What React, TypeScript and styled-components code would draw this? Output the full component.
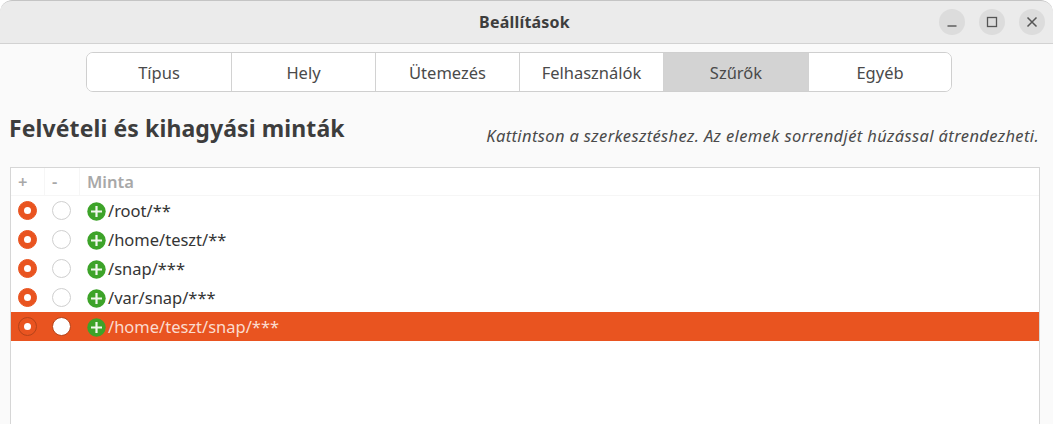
import styled, { createGlobalStyle } from 'styled-components';

const GlobalStyle = createGlobalStyle`
  html, body {
    margin: 0;
    height: 100%;
    overflow: hidden;
    background: #fff;
  }
  body {
    font-family: "Noto Sans", "Open Sans", sans-serif;
  }
`;

const Window = styled.div`
  width: 1053px;
  height: 424px;
  background: #fafafa;
  border-radius: 12px 12px 0 0;
  overflow: hidden;
  display: flex;
  flex-direction: column;
`;

const TitleBar = styled.header`
  height: 44px;
  box-sizing: border-box;
  flex: none;
  display: grid;
  grid-template-columns: 1fr auto 1fr;
  align-items: center;
  background: #ebebeb;
  border-top: 1px solid #c4c4c4;
  border-bottom: 1px solid #d2d2d2;
  border-radius: 12px 12px 0 0;
  padding: 0 8px 0 4px;
`;

const WindowTitle = styled.h1`
  grid-column: 2;
  margin: 0;
  font-size: 16px;
  font-weight: 700;
  color: #3d3d3d;
  letter-spacing: 0.2px;
`;

const WindowControls = styled.div`
  grid-column: 3;
  justify-self: end;
  display: flex;
  gap: 14px;
`;

const ControlButton = styled.button`
  width: 26px;
  height: 26px;
  padding: 0;
  border: none;
  border-radius: 50%;
  background: #dcdcdc;
  display: flex;
  align-items: center;
  justify-content: center;
`;

const Tabs = styled.nav`
  flex: none;
  align-self: flex-start;
  margin: 8px 0 0 86px;
  display: flex;
  height: 40px;
  box-sizing: border-box;
  background: #fff;
  border: 1px solid #cfcfcf;
  border-radius: 7px;
  overflow: hidden;
`;

const Tab = styled.div<{ $active?: boolean; $width: number }>`
  width: ${(p) => p.$width}px;
  box-sizing: border-box;
  display: flex;
  align-items: center;
  justify-content: center;
  font-size: 16.5px;
  color: #4a4a4a;
  background: ${(p) => (p.$active ? '#d3d3d3' : '#fff')};
  border-right: 1px solid #d2d2d2;

  &:last-child {
    border-right: none;
  }
`;

const SectionHeader = styled.div`
  flex: none;
  display: flex;
  justify-content: space-between;
  align-items: flex-end;
  padding: 0 14px 0 9px;
  margin-top: 21px;
  height: 34px;
`;

const SectionTitle = styled.h2`
  margin: 0 0 4px;
  font-size: 23px;
  line-height: 30px;
  font-weight: 700;
  letter-spacing: 0.1px;
  color: #3d3d3d;
`;

const Hint = styled.p`
  margin: 0 0 1px;
  font-size: 16.5px;
  line-height: 20px;
  font-style: italic;
  letter-spacing: 0.37px;
  color: #4a4a4a;
`;

const TreeFrame = styled.div`
  margin: 20px 13px 0 10px;
  flex: 1;
  background: #fff;
  border: 1px solid #d6d6d6;
  border-bottom: none;
`;

const HeaderRow = styled.div`
  display: grid;
  grid-template-columns: 34px 35px 1fr;
  height: 28px;
  box-sizing: border-box;
  align-items: stretch;
  border-bottom: 1px solid #f6f6f6;
`;

const HeaderCell = styled.div`
  display: flex;
  align-items: center;
  padding-left: 7px;
  font-size: 16.5px;
  font-weight: 600;
  color: #a8a8a8;
  border-right: 1px solid #f6f6f6;

  &:last-child {
    border-right: none;
  }
`;

const Row = styled.div<{ $selected?: boolean }>`
  display: grid;
  grid-template-columns: 34px 35px 1fr;
  height: 29px;
  align-items: center;
  background: ${(p) => (p.$selected ? '#e95420' : 'transparent')};
  color: ${(p) => (p.$selected ? '#fbdccf' : '#353535')};
`;

const RadioCell = styled.div`
  display: flex;
  padding-left: 7px;
`;

const Radio = styled.span<{ $checked?: boolean; $selected?: boolean }>`
  box-sizing: border-box;
  width: 19px;
  height: 19px;
  border-radius: 50%;
  display: flex;
  align-items: center;
  justify-content: center;
  background: ${(p) => (p.$checked ? '#e95420' : '#fff')};
  border: 1.5px solid
    ${(p) => (p.$selected ? '#b5431a' : p.$checked ? '#e95420' : '#cfcfcf')};

  &::after {
    content: '';
    display: ${(p) => (p.$checked ? 'block' : 'none')};
    width: 7px;
    height: 7px;
    border-radius: 50%;
    background: #fff;
  }
`;

const PatternCell = styled.div`
  display: flex;
  align-items: center;
  gap: 2px;
  padding-left: 7px;
  font-size: 16.5px;

  svg {
    margin-top: 1px;
    flex: none;
  }
`;

const AddIcon = () => (
  <svg width="19" height="19" viewBox="0 0 19 19" aria-hidden="true">
    <circle cx="9.5" cy="9.5" r="9.2" fill="#3da329" />
    <path d="M9.5 4v11M4 9.5h11" stroke="#f2f7ee" strokeWidth="2.2" fill="none" />
  </svg>
);

const tabs = [
  { label: 'Típus', width: 145 },
  { label: 'Hely', width: 144 },
  { label: 'Ütemezés', width: 144 },
  { label: 'Felhasználók', width: 144 },
  { label: 'Szűrők', width: 145, active: true },
  { label: 'Egyéb', width: 142 },
];

const patterns = ['/root/**', '/home/teszt/**', '/snap/***', '/var/snap/***', '/home/teszt/snap/***'];

export default function App() {
  return (
    <Window>
      <GlobalStyle />
      <TitleBar>
        <WindowTitle>Beállítások</WindowTitle>
        <WindowControls>
          <ControlButton aria-label="Minimize">
            <svg width="12" height="12" viewBox="0 0 12 12">
              <path d="M1.5 10h9" stroke="#555" strokeWidth="1.4" />
            </svg>
          </ControlButton>
          <ControlButton aria-label="Maximize">
            <svg width="12" height="12" viewBox="0 0 12 12">
              <rect x="1.5" y="1.5" width="9" height="9" fill="none" stroke="#555" strokeWidth="1.3" />
            </svg>
          </ControlButton>
          <ControlButton aria-label="Close">
            <svg width="12" height="12" viewBox="0 0 12 12">
              <path d="M1.5 1.5l9 9M10.5 1.5l-9 9" stroke="#555" strokeWidth="1.5" />
            </svg>
          </ControlButton>
        </WindowControls>
      </TitleBar>
      <Tabs>
        {tabs.map((t) => (
          <Tab key={t.label} $active={t.active} $width={t.width}>
            {t.label}
          </Tab>
        ))}
      </Tabs>
      <SectionHeader>
        <SectionTitle>Felvételi és kihagyási minták</SectionTitle>
        <Hint>Kattintson a szerkesztéshez. Az elemek sorrendjét húzással átrendezheti.</Hint>
      </SectionHeader>
      <TreeFrame>
        <HeaderRow>
          <HeaderCell>+</HeaderCell>
          <HeaderCell>-</HeaderCell>
          <HeaderCell>Minta</HeaderCell>
        </HeaderRow>
        {patterns.map((p, i) => {
          const selected = i === patterns.length - 1;
          return (
            <Row key={p} $selected={selected}>
              <RadioCell>
                <Radio $checked $selected={selected} />
              </RadioCell>
              <RadioCell>
                <Radio $selected={selected} />
              </RadioCell>
              <PatternCell>
                <AddIcon />
                {p}
              </PatternCell>
            </Row>
          );
        })}
      </TreeFrame>
    </Window>
  );
}
